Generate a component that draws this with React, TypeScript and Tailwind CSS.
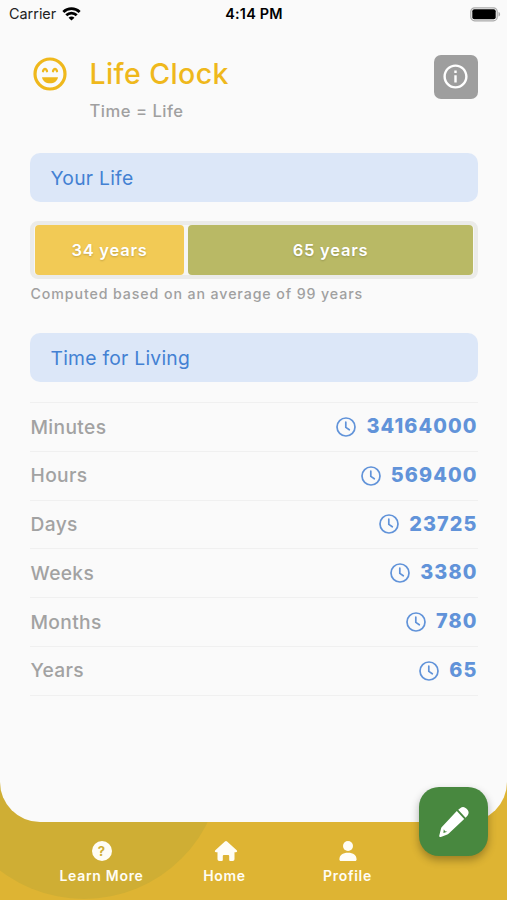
import { BiInfoCircle } from 'react-icons/bi';
import type { ReactNode } from 'react';

interface Stat {
  label: string;
  value: number;
}

const STATS: Stat[] = [
  { label: 'Minutes', value: 34164000 },
  { label: 'Hours', value: 569400 },
  { label: 'Days', value: 23725 },
  { label: 'Weeks', value: 3380 },
  { label: 'Months', value: 780 },
  { label: 'Years', value: 65 },
];

function WifiIcon() {
  return (
    <svg viewBox="0 0 20 14" className="w-[19px] h-[14px]" fill="none" stroke="#000" strokeWidth="2.9">
      <path d="M1.4 5a12.2 12.2 0 0 1 17.2 0" />
      <path d="M4.5 8.4a7.8 7.8 0 0 1 11 0" />
      <path d="M10 13.8 6.9 10.9a4.2 4.2 0 0 1 6.2 0z" fill="#000" stroke="none" />
    </svg>
  );
}

function BatteryIcon() {
  return (
    <svg viewBox="0 0 31 15" className="w-[31px] h-[15px]">
      <rect x="0.8" y="0.8" width="26.4" height="13" rx="3.8" fill="none" stroke="#aaa" strokeWidth="1.2" />
      <rect x="2.3" y="2.3" width="23.4" height="10" rx="2" fill="#000" />
      <path d="M28.5 5v4.6c1-.3 1.6-1.2 1.6-2.3s-.6-2-1.6-2.3z" fill="#aaa" />
    </svg>
  );
}

function LaughIcon() {
  return (
    <svg viewBox="0 0 40 40" className="w-10 h-10" fill="none" stroke="#efb81c" strokeLinecap="round">
      <circle cx="20" cy="20" r="15" strokeWidth="3.2" />
      <path d="M13 17.2c.5-1.6 1.2-2.4 2-2.4s1.5.8 2 2.4M23 17.2c.5-1.6 1.2-2.4 2-2.4s1.5.8 2 2.4" strokeWidth="2.3" />
      <path d="M12 23.2h16c-.5 3.7-3.9 6.1-8 6.1s-7.5-2.4-8-6.1z" fill="#efb81c" stroke="none" />
    </svg>
  );
}

function ClockIcon() {
  return (
    <svg
      viewBox="0 0 20 20"
      className="w-5 h-5"
      fill="none"
      stroke="currentColor"
      strokeWidth="1.7"
      strokeLinecap="round"
      strokeLinejoin="round"
    >
      <circle cx="10" cy="10" r="9" />
      <path d="M9.8 5.2v5.2l3.5 2.4" />
    </svg>
  );
}

function HelpIcon() {
  return (
    <span className="w-5 h-5 rounded-full bg-current flex items-center justify-center">
      <span className="text-[13px] leading-none font-bold text-[#cfae34]">?</span>
    </span>
  );
}

function HomeIcon() {
  return (
    <svg viewBox="0 0 24 22" className="w-6 h-[22px] ml-[2px]" fill="currentColor">
      <path d="M10.9 1.6a1.6 1.6 0 0 1 2.2 0l9.6 8.7c.9.9.4 2-.8 2h-1.4v7a1.7 1.7 0 0 1-1.7 1.7h-2.6a1 1 0 0 1-1-1v-4a1 1 0 0 0-1-1h-4.4a1 1 0 0 0-1 1v4a1 1 0 0 1-1 1H5.2a1.7 1.7 0 0 1-1.7-1.7v-7H2.1c-1.2 0-1.7-1.1-.8-2z" />
    </svg>
  );
}

function UserIcon() {
  return (
    <svg viewBox="0 0 20 22" className="w-5 h-[22px]" fill="currentColor">
      <circle cx="10" cy="6" r="5" />
      <path d="M1.4 19.4c0-4.4 3.2-6.7 8.6-6.7s8.6 2.3 8.6 6.7c0 .9-.6 1.5-1.5 1.5H2.9c-.9 0-1.5-.6-1.5-1.5z" />
    </svg>
  );
}

function PencilIcon() {
  return (
    <svg viewBox="0 0 30 30" className="w-[30px] h-[30px]" fill="#fff">
      <path d="m19.2 2.8 2-1.5a4.6 4.6 0 0 1 6.1.3l1 1a4.6 4.6 0 0 1 .3 5.8l-2 2.4z" />
      <path
        fillRule="evenodd"
        d="m17.8 4 7.4 8L9.8 26.6c-.6.6-1.3.9-2.1 1.2L1.8 29.9c-1 .3-1.8-.4-1.5-1.4l1.6-6.6c.2-.9.7-1.7 1.4-2.4zM4.8 22.2l-.4 3.9 3.9-1.4-2.2-.5z"
      />
    </svg>
  );
}

function SectionTitle({ children }: { children: ReactNode }) {
  return (
    <h2 className="h-[49px] shrink-0 rounded-[10px] bg-[#dce7f8] pl-[20.5px] pt-px flex items-center text-[19.3px] tracking-[0.25px] text-[#4381d3]">
      {children}
    </h2>
  );
}

function NavItem({ icon, label }: { icon: ReactNode; label: string }) {
  return (
    <button type="button" className="flex flex-col items-center w-[123px] text-[#fffdf5]">
      <span className="h-6 flex items-center">{icon}</span>
      <span className="mt-[3.5px] text-[14px] leading-[18px] font-semibold tracking-[0.7px]">{label}</span>
    </button>
  );
}

export default function App() {
  return (
    <div className="relative w-[507px] h-[900px] overflow-hidden bg-[#deb433] font-['Inter',sans-serif] flex flex-col">
      {/* Decorative circle behind the nav */}
      <div className="absolute left-[-54px] top-[623px] w-[276px] h-[276px] rounded-full bg-[#cfae34]" />

      <main className="relative h-[822px] bg-[#fafafa] rounded-b-[40px] flex flex-col">
        {/* Status bar */}
        <div className="h-7 shrink-0 grid grid-cols-3 items-center pl-[9px] pr-[6px] text-[14.4px] text-[#222]">
          <div className="flex items-center gap-[6px]">
            <span>Carrier</span>
            <WifiIcon />
          </div>
          <span className="text-center pr-[2px] font-semibold tracking-[0.2px] text-black">4:14 PM</span>
          <div className="flex justify-end">
            <BatteryIcon />
          </div>
        </div>

        {/* Header */}
        <header className="h-[125px] shrink-0 flex items-start pl-[30px] pr-[29px] pt-[26px]">
          <LaughIcon />
          <div className="ml-[19.5px] flex-1">
            <h1 className="text-[28.5px] leading-[40px] font-medium tracking-[0.4px] text-[#efb81c]">Life Clock</h1>
            <p className="mt-[5px] text-[16.6px] leading-6 font-medium tracking-[0.5px] text-[#a0a0a0]">Time = Life</p>
          </div>
          <button
            type="button"
            className="mt-[0.5px] w-[44px] h-[44px] mr-[0.5px] rounded-[7px] bg-[#9e9e9e] text-white flex items-center justify-center"
          >
            <BiInfoCircle className="w-[29px] h-[29px]" />
          </button>
        </header>

        <section className="pl-[30px] pr-[29px] flex flex-col">
          <SectionTitle>Your Life</SectionTitle>

          {/* Lived / remaining years */}
          <div className="mt-[19px] h-[58px] rounded-[8px] border-4 border-[#ebebe9] bg-[#f6f6f5] px-px flex gap-1 text-[16.5px] font-semibold tracking-[0.75px] text-white [text-shadow:0_1px_2px_rgba(0,0,0,0.2)]">
            <div className="w-[149px] rounded-[4px] bg-[#f2ca55] flex items-center justify-center">34 years</div>
            <div className="flex-1 rounded-[4px] bg-[#b9b965] flex items-center justify-center">65 years</div>
          </div>
          <p className="mt-[5px] pl-[0.5px] text-[14.2px] leading-5 font-medium tracking-[0.9px] text-[#a0a0a0]">
            Computed based on an average of 99 years
          </p>

          <div className="mt-[29px] flex flex-col">
            <SectionTitle>Time for Living</SectionTitle>
          </div>

          <ul className="mt-5 border-t border-[#f0f0f0]">
            {STATS.map((stat) => (
              <li key={stat.label} className="h-[48.8px] border-b border-[#f0f0f0] flex items-center justify-between">
                <span className="pl-[0.5px] text-[19.2px] font-medium tracking-[0.35px] text-[#a2a2a2]">{stat.label}</span>
                <span className="flex items-center gap-[10px] pr-[0.5px] text-[#6193d9]">
                  <ClockIcon />
                  <span className="text-[19.8px] font-extrabold tracking-[1.1px]">{stat.value}</span>
                </span>
              </li>
            ))}
          </ul>
        </section>
      </main>

      <nav className="relative h-[78px] pl-[40px] pt-[17px] flex items-start">
        <NavItem icon={<HelpIcon />} label="Learn More" />
        <NavItem icon={<HomeIcon />} label="Home" />
        <NavItem icon={<UserIcon />} label="Profile" />
      </nav>

      {/* Floating edit button */}
      <button
        type="button"
        className="absolute left-[419px] top-[787px] w-[69px] h-[69px] rounded-[20px] bg-[#48883f] shadow-[0_4px_8px_rgba(0,0,0,0.3)] flex items-center justify-center"
      >
        <PencilIcon />
      </button>
    </div>
  );
}
